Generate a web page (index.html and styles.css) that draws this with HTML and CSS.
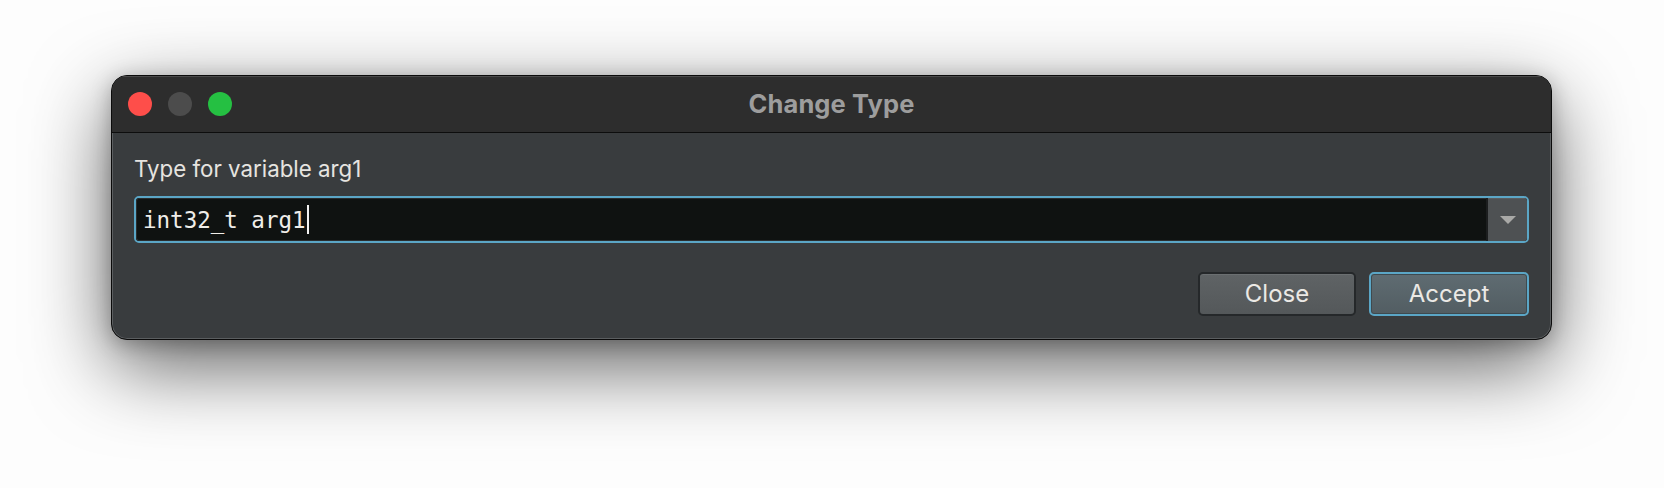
FILE: index.html
```html
<!DOCTYPE html>
<html>
<head>
<meta charset="utf-8">
<link rel="stylesheet" href="styles.css">
</head>
<body>
<div class="stage">
  <div class="window">
    <div class="titlebar">
      <div class="lights">
        <span class="light red"></span>
        <span class="light gray"></span>
        <span class="light green"></span>
      </div>
      <div class="title">Change Type</div>
    </div>
    <div class="content">
      <div class="label">Type for variable arg1</div>
      <div class="combo">
        <div class="field"><span class="value">int32_t arg1</span><span class="caret"></span></div>
        <div class="drop"><svg width="18" height="10" viewBox="0 0 18 10"><polygon points="1,1 17,1 9,9" fill="#a9a9a7"/></svg></div>
      </div>
      <div class="actions">
        <button class="btn">Close</button>
        <button class="btn primary">Accept</button>
      </div>
    </div>
  </div>
</div>
</body>
</html>
```

FILE: styles.css
```css
html, body {
  margin: 0;
  padding: 0;
  background: #fdfdfd;
}
body {
  width: 1664px;
  height: 488px;
  overflow: hidden;
  font-family: "Inter", "Liberation Sans", sans-serif;
}
.stage {
  padding: 75px 0 0 111px;
}
.window {
  width: 1441px;
  height: 265px;
  box-sizing: border-box;
  border: 1px solid #0b0b0b;
  border-radius: 16px;
  background: #393c3e;
  overflow: hidden;
  box-shadow: inset 0 0 0 1px #5b5e60, 0 26px 80px rgba(0,0,0,0.62), 0 4px 20px rgba(0,0,0,0.25);
  display: flex;
  flex-direction: column;
}
.titlebar {
  height: 56px;
  flex: none;
  background: #2d2d2d;
  border-bottom: 1px solid #0d0d0d;
  position: relative;
  display: flex;
  align-items: center;
  justify-content: center;
  box-shadow: inset 0 1px 0 #4a4a4a;
}
.lights {
  position: absolute;
  left: 16px;
  top: 16px;
  display: flex;
  gap: 16px;
}
.light {
  width: 24px;
  height: 24px;
  border-radius: 50%;
  display: block;
}
.red { background: #fe4e4a; }
.gray { background: #4c4c4c; }
.green { background: #25c042; }
.title {
  color: #9d9d9d;
  font-weight: 700;
  font-size: 25.5px;
  letter-spacing: 0.1px;
  margin-top: -1px;
}
.content {
  flex: 1;
  padding: 22px 22px 0 22px;
  display: flex;
  flex-direction: column;
}
.label {
  color: #e6e4e0;
  font-size: 22.3px;
  line-height: 27px;
  height: 27px;
}
.combo {
  margin-top: 14px;
  height: 47px;
  box-sizing: border-box;
  border: 2px solid #5ba6c6;
  border-radius: 5px;
  display: flex;
  overflow: hidden;
  background: #0f1211;
}
.field {
  flex: 1;
  display: flex;
  align-items: center;
  padding-left: 6px;
  border: 1px solid #2a2d2e;
  border-right: none;
  border-radius: 3px 0 0 3px;
}
.value {
  font-family: "DejaVu Sans Mono", "Liberation Mono", monospace;
  color: #efede9;
  font-size: 22.5px;
}
.caret {
  width: 2px;
  height: 29px;
  background: #f2f2f2;
  margin-left: 1px;
}
.drop {
  width: 39px;
  flex: none;
  background: #4e5153;
  border-left: 2px solid #1c1e1f;
  display: flex;
  align-items: center;
  justify-content: center;
  box-shadow: inset 0 1px 0 #5a5d5f;
}
.actions {
  margin-top: 29px;
  display: flex;
  justify-content: flex-end;
  gap: 13px;
}
.btn {
  font-family: "Inter", "Liberation Sans", sans-serif;
  font-size: 24px;
  color: #ebe9e5;
  height: 44px;
  width: 158px;
  box-sizing: border-box;
  border: 2px solid #25282a;
  border-radius: 5px;
  background: linear-gradient(#5f6365, #54585a);
  box-shadow: inset 0 1px 0 #6b6f71;
  padding: 0 0 2px 0;
}
.btn.primary {
  width: 160px;
  border-color: #5ba6c6;
  background: linear-gradient(#5f6c72, #525d62);
  box-shadow: inset 0 0 0 1px #3f4a4f;
}
```
